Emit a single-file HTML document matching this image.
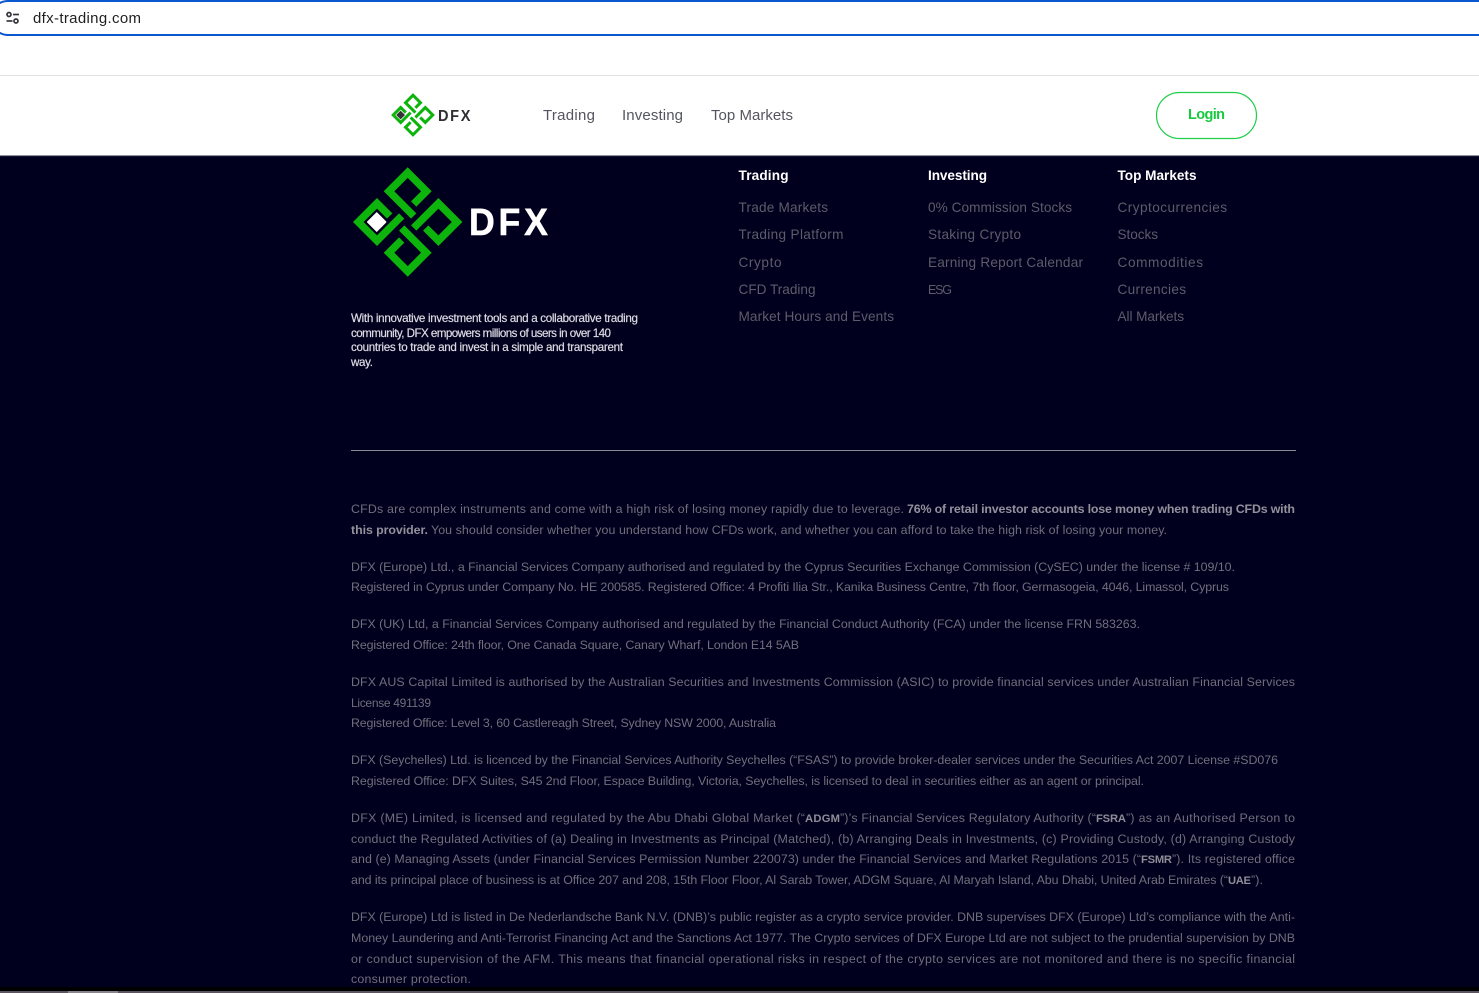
<!DOCTYPE html>
<html lang="en">
<head>
<meta charset="utf-8">
<title>DFX</title>
<style>
html,body{margin:0;padding:0;width:1479px;height:993px;overflow:hidden;background:#00001e}
svg{display:block;font-family:"Liberation Sans",sans-serif}
.l{font-size:12.4px;fill:#6f6f7c}
.b{font-size:12.4px;fill:#92929c;font-weight:bold}
.c{font-size:11.2px;fill:#8e8e98;font-weight:bold}
.f{font-size:13.6px;fill:#5c5c6a}
.h{font-size:13.6px;fill:#fff;font-weight:bold}
.p{font-size:11.6px;fill:#dcdce4;stroke:#dcdce4;stroke-width:.2px}
.n{font-size:15px;fill:#55555f}
</style>
</head>
<body>
<svg width="1479" height="993" viewBox="0 0 1479 993" xmlns="http://www.w3.org/2000/svg">
<rect x="0" y="0" width="1479" height="156" fill="#fff"/>
<rect x="-9" y="1" width="1560" height="34" rx="17" fill="#fff" stroke="#0b57d0" stroke-width="2"/>
<g fill="none" stroke="#33363a" stroke-width="1.700">
<circle cx="9" cy="14.500" r="2"/><path d="M13 14.500H19"/>
<circle cx="16" cy="21" r="2"/><path d="M6.500 21H12.500"/>
</g>
<text x="33" y="23" font-size="15" fill="#1f1f1f" textLength="108">dfx-trading.com</text>
<rect x="0" y="75" width="1479" height="1" fill="#e2e2e2"/>

<defs>
<g id="arm"><path d="M6-18 18.700-30.700 0-49.400-18.700-30.700 6-6" fill="none" stroke="#0cb40c" stroke-width="7.500" stroke-linejoin="miter"/></g>
<g id="mark">
<use href="#arm"/><use href="#arm" transform="rotate(90)"/><use href="#arm" transform="rotate(180)"/><use href="#arm" transform="rotate(270)"/>
</g>
</defs>

<g transform="translate(413 115) scale(.4)"><use href="#mark"/><path d="M-31-11-20 0-31 11-42 0Z" fill="#333"/></g>
<g transform="translate(438 121) scale(.94 1)"><text x="0" y="0" font-size="15.500" font-weight="bold" fill="#2f2f33" textLength="34.500">DFX</text></g>
<text x="543" y="120" class="n" textLength="52">Trading</text>
<text x="622" y="120" class="n" textLength="61">Investing</text>
<text x="711" y="120" class="n" textLength="82">Top Markets</text>
<rect x="1156.500" y="92.500" width="100" height="46" rx="23" fill="#fff" stroke="#1fcf4a" stroke-width="1.200"/>
<text x="1188" y="119" font-size="14.500" font-weight="bold" fill="#16c93e" textLength="37">Login</text>

<rect x="0" y="156" width="1479" height="834" fill="#00001e"/>
<rect x="0" y="155.500" width="1479" height="1" fill="#22223a"/>
<rect x="0" y="987" width="1479" height="4" fill="#000"/>
<rect x="0" y="991" width="1479" height="2" fill="#5c5560"/>
<rect x="68" y="991" width="50" height="2" fill="#8a858c"/>

<g transform="translate(407.700 222)"><use href="#mark"/><path d="M-31-10-21.500-.5Q-21 0-21.500.5L-31 10-40.500.5Q-41 0-40.500-.5Z" fill="#fff"/></g>
<g transform="translate(469 235) scale(.94 1)"><text x="0" y="0" font-size="38" font-weight="bold" fill="#fff" stroke="#fff" stroke-width=".5" textLength="84">DFX</text></g>

<text x="351" y="322" class="p" textLength="287">With innovative investment tools and a collaborative trading</text>
<text x="351" y="337" class="p" textLength="260">community, DFX empowers millions of users in over 140</text>
<text x="351" y="351" class="p" textLength="272">countries to trade and invest in a simple and transparent</text>
<text x="351" y="366" class="p" textLength="22">way.</text>

<text x="738.500" y="180" class="h" textLength="50">Trading</text>
<text x="928" y="180" class="h" textLength="59">Investing</text>
<text x="1117.500" y="180" class="h" textLength="79">Top Markets</text>

<text x="738.500" y="212" class="f" textLength="89.500">Trade Markets</text>
<text x="738.500" y="239" class="f" textLength="105">Trading Platform</text>
<text x="738.500" y="267" class="f" textLength="43">Crypto</text>
<text x="738.500" y="294" class="f" textLength="77">CFD Trading</text>
<text x="738.500" y="321" class="f" textLength="155.500">Market Hours and Events</text>

<text x="928" y="212" class="f" textLength="144">0% Commission Stocks</text>
<text x="928" y="239" class="f" textLength="93">Staking Crypto</text>
<text x="928" y="267" class="f" textLength="155">Earning Report Calendar</text>
<text x="928" y="294" class="f" style="font-size:12.500px" textLength="24">ESG</text>

<text x="1117.500" y="212" class="f" textLength="109.500">Cryptocurrencies</text>
<text x="1117.500" y="239" class="f" textLength="40.500">Stocks</text>
<text x="1117.500" y="267" class="f" textLength="85.500">Commodities</text>
<text x="1117.500" y="294" class="f" textLength="68.500">Currencies</text>
<text x="1117.500" y="321" class="f" textLength="66.500">All Markets</text>

<rect x="351" y="450" width="945" height="1" fill="#8a8a95"/>

<text x="351" y="513" class="l" textLength="553">CFDs are complex instruments and come with a high risk of losing money rapidly due to leverage.</text>
<text x="907" y="513" class="b" textLength="388">76% of retail investor accounts lose money when trading CFDs with</text>
<text x="351" y="534" class="b" textLength="77">this provider.</text>
<text x="431" y="534" class="l" textLength="736">You should consider whether you understand how CFDs work, and whether you can afford to take the high risk of losing your money.</text>

<text x="351" y="571" class="l" textLength="884">DFX (Europe) Ltd., a Financial Services Company authorised and regulated by the Cyprus Securities Exchange Commission (CySEC) under the license # 109/10.</text>
<text x="351" y="591" class="l" textLength="878">Registered in Cyprus under Company No. HE 200585. Registered Office: 4 Profiti Ilia Str., Kanika Business Centre, 7th floor, Germasogeia, 4046, Limassol, Cyprus</text>

<text x="351" y="628" class="l" textLength="789">DFX (UK) Ltd, a Financial Services Company authorised and regulated by the Financial Conduct Authority (FCA) under the license FRN 583263.</text>
<text x="351" y="649" class="l" textLength="448">Registered Office: 24th floor, One Canada Square, Canary Wharf, London E14 5AB</text>

<text x="351" y="686" class="l" textLength="944">DFX AUS Capital Limited is authorised by the Australian Securities and Investments Commission (ASIC) to provide financial services under Australian Financial Services</text>
<text x="351" y="707" class="l" style="font-size:12px" textLength="80">License 491139</text>
<text x="351" y="727" class="l" textLength="425">Registered Office: Level 3, 60 Castlereagh Street, Sydney NSW 2000, Australia</text>

<text x="351" y="764" class="l" textLength="927">DFX (Seychelles) Ltd. is licenced by the Financial Services Authority Seychelles (“FSAS”) to provide broker-dealer services under the Securities Act 2007 License #SD076</text>
<text x="351" y="785" class="l" textLength="793">Registered Office: DFX Suites, S45 2nd Floor, Espace Building, Victoria, Seychelles, is licensed to deal in securities either as an agent or principal.</text>

<text x="351" y="822" class="l" textLength="454">DFX (ME) Limited, is licensed and regulated by the Abu Dhabi Global Market (“</text>
<text x="805" y="822" class="c" textLength="35">ADGM</text>
<text x="840" y="822" class="l" textLength="256">”)’s Financial Services Regulatory Authority (“</text>
<text x="1096" y="822" class="c" textLength="30">FSRA</text>
<text x="1126" y="822" class="l" textLength="169">”) as an Authorised Person to</text>
<text x="351" y="843" class="l" textLength="944">conduct the Regulated Activities of (a) Dealing in Investments as Principal (Matched), (b) Arranging Deals in Investments, (c) Providing Custody, (d) Arranging Custody</text>
<text x="351" y="863" class="l" textLength="790">and (e) Managing Assets (under Financial Services Permission Number 220073) under the Financial Services and Market Regulations 2015 (“</text>
<text x="1141" y="863" class="c" textLength="31">FSMR</text>
<text x="1172" y="863" class="l" textLength="123">”). Its registered office</text>
<text x="351" y="884" class="l" textLength="877">and its principal place of business is at Office 207 and 208, 15th Floor Floor, Al Sarab Tower, ADGM Square, Al Maryah Island, Abu Dhabi, United Arab Emirates (“</text>
<text x="1228" y="884" class="c" textLength="23">UAE</text>
<text x="1251" y="884" class="l" textLength="12">”).</text>

<text x="351" y="921" class="l" textLength="944">DFX (Europe) Ltd is listed in De Nederlandsche Bank N.V. (DNB)’s public register as a crypto service provider. DNB supervises DFX (Europe) Ltd’s compliance with the Anti-</text>
<text x="351" y="942" class="l" textLength="944">Money Laundering and Anti-Terrorist Financing Act and the Sanctions Act 1977. The Crypto services of DFX Europe Ltd are not subject to the prudential supervision by DNB</text>
<text x="351" y="963" class="l" textLength="944">or conduct supervision of the AFM. This means that financial operational risks in respect of the crypto services are not monitored and there is no specific financial</text>
<text x="351" y="983" class="l" textLength="120">consumer protection.</text>
</svg>
</body>
</html>
